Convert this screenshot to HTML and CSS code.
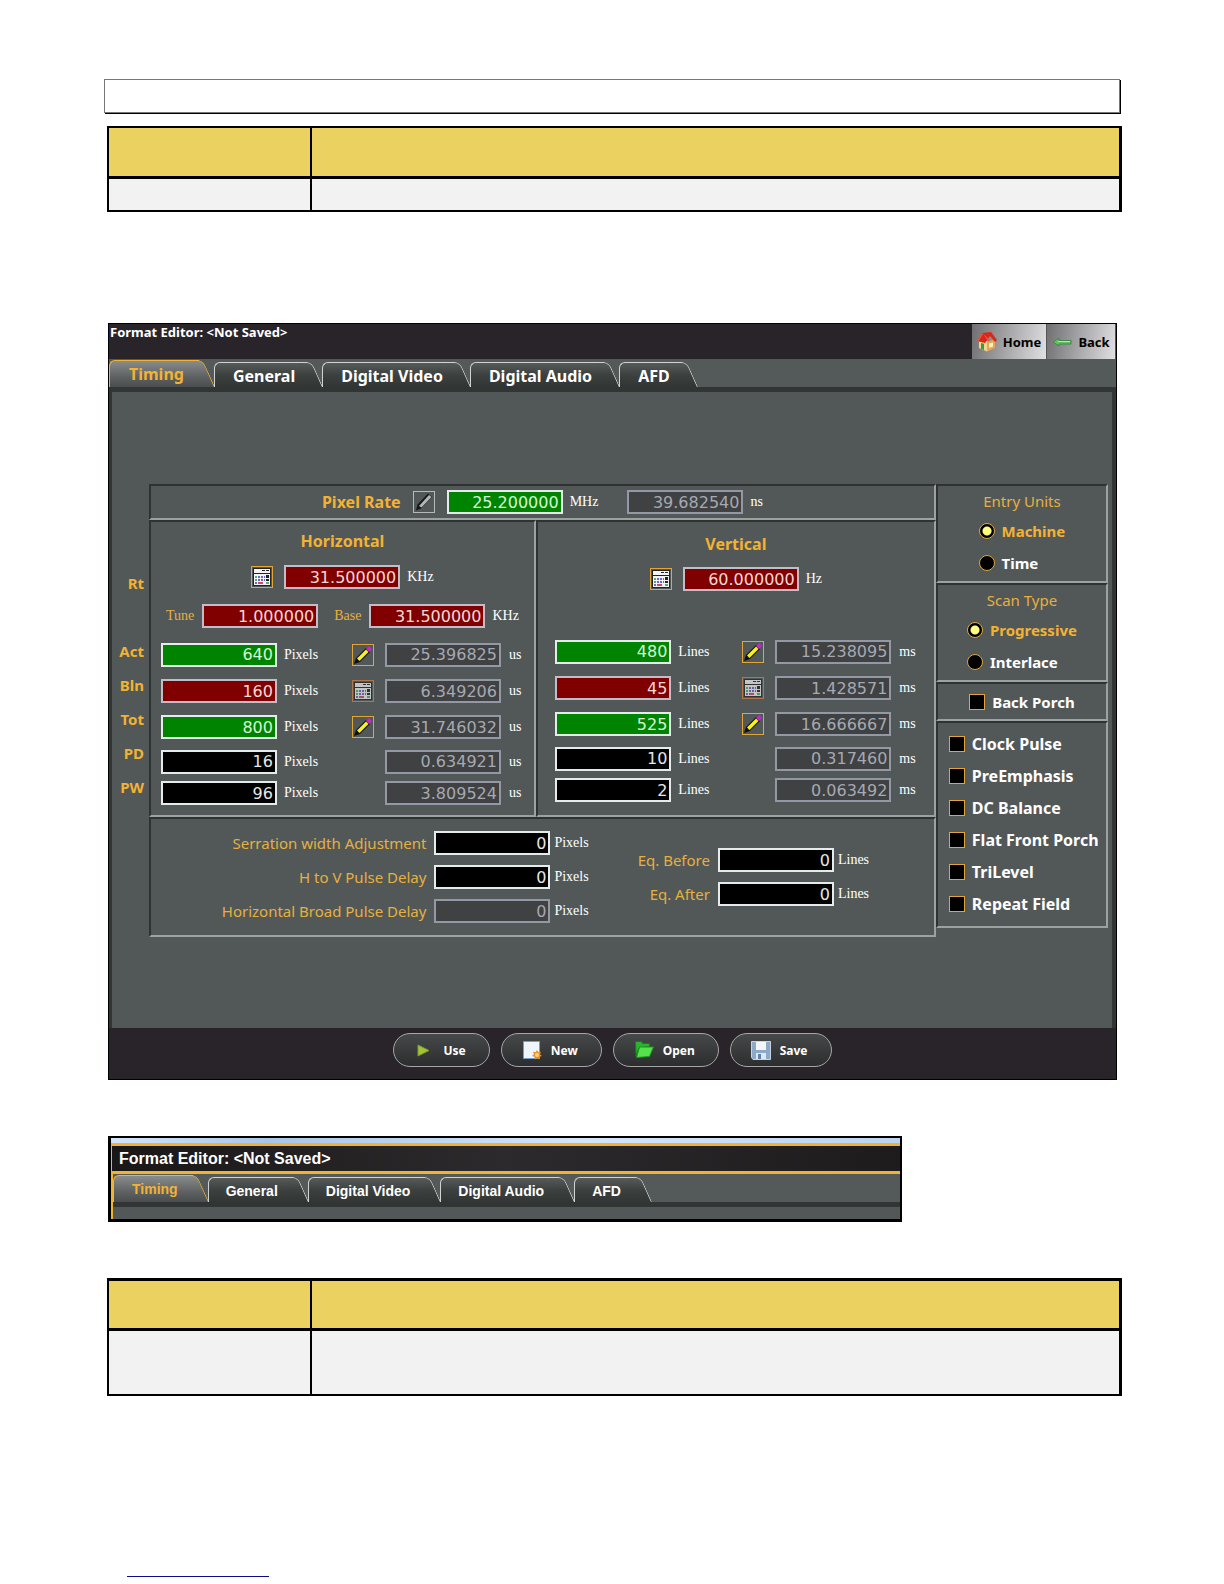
FILE: index.html
```html
<!DOCTYPE html>
<html lang="en">
<head>
<meta charset="utf-8">
<meta name="viewport" content="width=device-width, initial-scale=1">
<title>Format Editor</title>
<link rel="stylesheet" href="styles.css">
</head>
<body>
<svg class="defs" aria-hidden="true">
  <symbol id="pencil" viewBox="0 0 20 20">
    <path d="M1 19l2-6L13 3l4 4L7 17z" fill="#111"/>
    <path d="M4 13.500L13 4.500l2.500 2.500L6.500 16z" fill="#f8f21c"/>
    <path d="M13 4l3-3 3 3-3 3z" fill="#c227c9"/>
  </symbol>
  <symbol id="pencil-plain" viewBox="0 0 20 20">
    <path d="M2 18.500l1.500-6L14 1.500l4 3.500L7 16.500z" fill="#161819"/>
    <path d="M5 14L15 3l2.500 2L7.500 15.500z" fill="#b2b6b7"/>
  </symbol>
  <symbol id="calc" viewBox="0 0 20 20">
    <path d="M1 1h18v18H1z" fill="#222"/>
    <path d="M2 2h16v4H2zM2 7h16v11H2z" fill="#f4f4f4"/>
    <path d="M10 3h3v1h-3zM14 3h3v1h-3z" fill="#222"/>
    <path d="M3 9h2v2H3zM3 12h2v2H3z" fill="#58a878"/>
    <path d="M6 9h2v2H6zM9 9h2v2H9zM12 9h1v2h-1zM6 12h2v2H6zM9 12h2v2H9zM12 12h1v2h-1zM3 15h2v2H3z" fill="#6f65c4"/>
    <path d="M6 15h5v2H6z" fill="#d24a60"/>
    <path d="M14 8h3v3h-3zM14 12h3v2h-3z" fill="#222"/>
    <path d="M14 15h3v2h-3z" fill="#58a878"/>
  </symbol>
</svg>

<main class="page">
  <div class="header-box"></div>

  <table class="sheet">
    <thead><tr><th class="sheet-name"></th><th></th></tr></thead>
    <tbody><tr><td></td><td></td></tr></tbody>
  </table>

  <section class="editor">
    <header class="titlebar">
      <h1 class="title">Format Editor: &lt;Not Saved&gt;</h1>
      <button class="nav" type="button">
        <svg class="nav-icon" viewBox="0 0 20 20" aria-hidden="true">
          <path d="M2 9v7l8 3.500V9z" fill="#f3d68f"/><path d="M10 19.500l8-3.500V8l-8 1z" fill="#e2a85a"/>
          <path d="M0 9l5-8 9-1 6 8-2 2-5-6-5 7z" fill="#d9281b"/><path d="M5 1L0 9l1 1 5-8 6 8 1-2z" fill="#f15a3a"/>
          <path d="M4 11l3 .8V18l-3-1.200z" fill="#3e9b35"/><path d="M12 11.500l4-1v4l-4 1.200z" fill="#fff3bd"/>
        </svg>Home</button>
      <button class="nav" type="button">
        <svg class="nav-icon" viewBox="0 0 20 20" aria-hidden="true">
          <path d="M1 10l6-4v2.500h12v3.500H7V14z" fill="#69bd69" stroke="#3d8a45"/><path d="M6 9.500h12" stroke="#b4e6ad"/>
        </svg>Back</button>
    </header>

    <nav class="tabs">
      <button class="tab active" type="button">Timing</button>
      <button class="tab" type="button">General</button>
      <button class="tab" type="button">Digital Video</button>
      <button class="tab" type="button">Digital Audio</button>
      <button class="tab" type="button">AFD</button>
    </nav>

    <div class="content">
      <div class="row-names">
        <span class="rate">Rt</span><span>Act</span><span>Bln</span><span>Tot</span><span>PD</span><span>PW</span>
      </div>

      <div class="timing">
        <div class="panel pixel-rate">
          <label class="heading" for="pixel-rate">Pixel Rate</label>
          <button class="icon plain" type="button" aria-label="Edit pixel rate"><svg><use href="#pencil-plain"/></svg></button>
          <input class="field green" id="pixel-rate" value="25.200000"><span class="unit">MHz</span>
          <input class="field gray period" value="39.682540" aria-label="Pixel period" readonly><span class="unit">ns</span>
        </div>

        <div class="panel axis">
          <h2 class="heading">Horizontal</h2>
          <div class="line">
            <button class="icon" type="button" aria-label="Calculate horizontal rate"><svg><use href="#calc"/></svg></button>
            <input class="field red" value="31.500000" aria-label="Horizontal rate"><span class="unit">KHz</span>
          </div>
          <div class="line tune">
            <label class="small" for="tune">Tune</label><input class="field red" id="tune" value="1.000000">
            <label class="small base" for="base">Base</label><input class="field red" id="base" value="31.500000"><span class="unit">KHz</span>
          </div>
          <div class="values">
            <input class="field green" value="640" aria-label="Active pixels"><span>Pixels</span>
            <button class="icon" type="button" aria-label="Edit active"><svg><use href="#pencil"/></svg></button>
            <input class="field gray" value="25.396825" aria-label="Active time" readonly><span>us</span>

            <input class="field red" value="160" aria-label="Blanking pixels"><span>Pixels</span>
            <button class="icon dim" type="button" aria-label="Calculate blanking"><svg><use href="#calc"/></svg></button>
            <input class="field gray" value="6.349206" aria-label="Blanking time" readonly><span>us</span>

            <input class="field green" value="800" aria-label="Total pixels"><span>Pixels</span>
            <button class="icon" type="button" aria-label="Edit total"><svg><use href="#pencil"/></svg></button>
            <input class="field gray" value="31.746032" aria-label="Total time" readonly><span>us</span>

            <input class="field" value="16" aria-label="Pulse delay pixels"><span>Pixels</span><i></i>
            <input class="field gray" value="0.634921" aria-label="Pulse delay time" readonly><span>us</span>

            <input class="field" value="96" aria-label="Pulse width pixels"><span>Pixels</span><i></i>
            <input class="field gray" value="3.809524" aria-label="Pulse width time" readonly><span>us</span>
          </div>
        </div>

        <div class="panel axis vertical">
          <h2 class="heading">Vertical</h2>
          <div class="line">
            <button class="icon" type="button" aria-label="Calculate vertical rate"><svg><use href="#calc"/></svg></button>
            <input class="field red" value="60.000000" aria-label="Vertical rate"><span class="unit">Hz</span>
          </div>
          <div class="values">
            <input class="field green" value="480" aria-label="Active lines"><span>Lines</span>
            <button class="icon" type="button" aria-label="Edit active"><svg><use href="#pencil"/></svg></button>
            <input class="field gray" value="15.238095" aria-label="Active time" readonly><span>ms</span>

            <input class="field red" value="45" aria-label="Blanking lines"><span>Lines</span>
            <button class="icon dim" type="button" aria-label="Calculate blanking"><svg><use href="#calc"/></svg></button>
            <input class="field gray" value="1.428571" aria-label="Blanking time" readonly><span>ms</span>

            <input class="field green" value="525" aria-label="Total lines"><span>Lines</span>
            <button class="icon" type="button" aria-label="Edit total"><svg><use href="#pencil"/></svg></button>
            <input class="field gray" value="16.666667" aria-label="Total time" readonly><span>ms</span>

            <input class="field" value="10" aria-label="Pulse delay lines"><span>Lines</span><i></i>
            <input class="field gray" value="0.317460" aria-label="Pulse delay time" readonly><span>ms</span>

            <input class="field" value="2" aria-label="Pulse width lines"><span>Lines</span><i></i>
            <input class="field gray" value="0.063492" aria-label="Pulse width time" readonly><span>ms</span>
          </div>
        </div>

        <div class="panel adjust">
          <div class="adjust-group">
            <label for="serration">Serration width Adjustment</label><input class="field" id="serration" value="0"><span>Pixels</span>
            <label for="hv-delay">H to V Pulse Delay</label><input class="field" id="hv-delay" value="0"><span>Pixels</span>
            <label for="broad-delay">Horizontal Broad Pulse Delay</label><input class="field gray" id="broad-delay" value="0" readonly><span>Pixels</span>
          </div>
          <div class="adjust-group">
            <label for="eq-before">Eq. Before</label><input class="field" id="eq-before" value="0"><span>Lines</span>
            <label for="eq-after">Eq. After</label><input class="field" id="eq-after" value="0"><span>Lines</span>
          </div>
        </div>
      </div>

      <aside class="options">
        <fieldset class="panel choice">
          <div class="choice-title">Entry Units</div>
          <div class="choice-list">
            <label><input type="radio" name="units" checked><span>Machine</span></label>
            <label><input type="radio" name="units"><span>Time</span></label>
          </div>
        </fieldset>
        <fieldset class="panel choice">
          <div class="choice-title">Scan Type</div>
          <div class="choice-list">
            <label><input type="radio" name="scan" checked><span>Progressive</span></label>
            <label><input type="radio" name="scan"><span>Interlace</span></label>
          </div>
        </fieldset>
        <div class="panel checks porch">
          <label><input type="checkbox"><span>Back Porch</span></label>
        </div>
        <div class="panel checks flags">
          <label><input type="checkbox"><span>Clock Pulse</span></label>
          <label><input type="checkbox"><span>PreEmphasis</span></label>
          <label><input type="checkbox"><span>DC Balance</span></label>
          <label><input type="checkbox"><span>Flat Front Porch</span></label>
          <label><input type="checkbox"><span>TriLevel</span></label>
          <label><input type="checkbox"><span>Repeat Field</span></label>
        </div>
      </aside>
    </div>

    <footer class="actions">
      <button class="action" type="button">
        <svg viewBox="0 0 20 20" aria-hidden="true"><path d="M4 5l11 5.500L4 16z" fill="#a3c339" stroke="#7f9a28"/></svg>Use</button>
      <button class="action" type="button">
        <svg viewBox="0 0 20 20" aria-hidden="true">
          <path d="M1.500 1.500h16v17h-16z" fill="#eef5fd" stroke="#6f9fd0"/>
          <path d="M15 10l1.300 2.200 2.700-.4-1 2.400 2 1.800-2.500.8-.3 2.700-2.200-1.300-2.200 1.300-.3-2.700-2.500-.8 2-1.800-1-2.400 2.700.4z" fill="#ef8d22"/>
          <circle cx="15" cy="15" r="2" fill="#ffd57c"/>
        </svg>New</button>
      <button class="action" type="button">
        <svg viewBox="0 0 20 20" aria-hidden="true">
          <path d="M1.500 1.500h6l1 2h7v3L5 8 2 16z" fill="#29b52c" stroke="#147c1b"/>
          <path d="M5.500 7h14l-4 9.500-13 1z" fill="#55e04c" stroke="#1c9422"/>
        </svg>Open</button>
      <button class="action" type="button">
        <svg viewBox="0 0 20 20" aria-hidden="true">
          <path d="M.5 1.500h19v18H2l-1.500-2z" fill="#8ea8c8" stroke="#c5d4e6"/>
          <path d="M5 2h10v8H5z" fill="#f3f5f7"/><path d="M5 13h10v6H5z" fill="#dce9f5"/><path d="M7 14h3v5H7z" fill="#5f81aa"/>
        </svg>Save</button>
    </footer>
  </section>

  <section class="snippet">
    <div class="sky"></div>
    <h2 class="snippet-title">Format Editor: &lt;Not Saved&gt;</h2>
    <div class="snippet-body">
      <nav class="tabs compact">
        <button class="tab active" type="button">Timing</button>
        <button class="tab" type="button">General</button>
        <button class="tab" type="button">Digital Video</button>
        <button class="tab" type="button">Digital Audio</button>
        <button class="tab" type="button">AFD</button>
      </nav>
    </div>
  </section>

  <table class="sheet tall">
    <thead><tr><th class="sheet-name"></th><th></th></tr></thead>
    <tbody><tr><td></td><td></td></tr></tbody>
  </table>

  <a class="foot-link" href="#" aria-label="Website"></a>
</main>
</body>
</html>
```
FILE: styles.css
```css
* { box-sizing: border-box; }

body {
  margin: 0;
  background: #fff;
  font-family: "Noto Sans", "Open Sans", sans-serif;
}

button, input { font-family: inherit; }
button { cursor: pointer; }
.defs { display: none; }

.page {
  display: flex;
  flex-direction: column;
  padding: 79px 102px 8px 104px;
}

.header-box {
  height: 34px;
  margin-right: 2px;
  border: 1px solid #777;
  box-shadow: 1px 1px 0 #000;
}

/* Ruled tables */
.sheet {
  margin: 13px 0 0 3px;
  table-layout: fixed;
  border-collapse: collapse;
  border: 2px solid #000;
  border-right-width: 3px;
}
.sheet-name { width: 20%; }
.sheet th, .sheet td { padding: 0; border: 2px solid #000; }
.sheet th:last-child, .sheet td:last-child { border-right-width: 3px; }
.sheet th { height: 50px; background: #ebd160; border-bottom-width: 3px; }
.sheet td { height: 34px; background: #f2f2f2; }
.sheet.tall { margin-top: 56px; border-top-width: 3px; }
.sheet.tall td { height: 65px; }

/* Editor window */
.editor {
  margin: 111px 5px 0 4px;
  border: 1px solid #000;
  background: #525857;
}

.titlebar { display: flex; height: 35px; background: #29242a; }
.title {
  flex: 1;
  margin: 0;
  padding-left: 1px;
  font-size: 13px;
  line-height: 16px;
  color: #fff;
}
.nav {
  display: flex;
  align-items: center;
  justify-content: center;
  gap: 6px;
  width: 75px;
  padding: 0;
  border: 0;
  border-right: 1px solid #555;
  background: linear-gradient(100deg, #6f6f72, #a9a9ac 50%, #e0e0e2);
  font-size: 13px;
  font-weight: 700;
  color: #000;
}
.nav + .nav { width: 69px; }
.nav-icon { width: 20px; height: 20px; }

.tabs {
  display: flex;
  align-items: flex-end;
  height: 33px;
  padding-top: 1px;
  border-bottom: 5px solid #313534;
  background: #545a59;
}
.tab {
  position: relative;
  isolation: isolate;
  height: 25px;
  margin-right: -1px;
  padding: 3px 28px 0 19px;
  border: 0;
  background: none;
  font-size: 16px;
  font-weight: 700;
  line-height: 22px;
  color: #fff;
}
.tab::before, .tab::after {
  content: "";
  position: absolute;
  z-index: -1;
  top: 0;
  bottom: 0;
  border: 0 solid #d0d3d2;
  border-top-width: 1px;
  background: linear-gradient(#565b5a, #3c403f 50%, #313534);
}
.tab::before { left: 0; right: 16px; border-left-width: 1px; border-top-left-radius: 6px; }
.tab::after {
  right: 0;
  width: 16px;
  border-right-width: 1px;
  border-top-right-radius: 6px;
  transform: skewX(24deg);
  transform-origin: bottom right;
}
.tab.active { height: 27px; padding: 1px 31px 0 20px; color: #f2b233; }
.tab.active::before, .tab.active::after {
  border-color: #f2b233;
  background: linear-gradient(#8a8c8c, #5f6262 60%, #4a4d4d);
}

.content {
  display: flex;
  align-items: flex-start;
  padding: 92px 4px 91px 0;
  border: 0 solid #313534;
  border-width: 0 4px 0 3px;
}
.row-names {
  display: flex;
  flex-direction: column;
  width: 37px;
  padding: 82px 5px 0 0;
  font-size: 15px;
  font-weight: 700;
  line-height: 34px;
  text-align: right;
  color: #f2b233;
}
.rate { margin-bottom: 34px; }

.timing { flex: 786; display: grid; grid-template-columns: 386fr 399fr; }
.options { flex: 172; }

.panel {
  min-width: 0;
  margin: 0;
  border: 2px solid;
  border-color: #2e3332 #9ca2a1 #9ca2a1 #2e3332;
}
.heading {
  margin: 0;
  font-size: 16px;
  font-weight: 700;
  line-height: 20px;
  text-align: center;
  color: #f2b233;
}

.field {
  width: 116px;
  height: 24px;
  padding: 0 2px;
  border: 2px solid #e4ebeb;
  border-radius: 0;
  background: #000;
  font-family: "DejaVu Sans", sans-serif;
  font-size: 16px;
  text-align: right;
  color: #e6e6e6;
}
.green { background: #008400; color: #d5f5d5; }
.red { border-color: #c3bcc9; background: #800000; color: #f6d8d8; }
.gray { border-color: #9498a5; background: #3f4143; color: #a6a9b0; }

.unit, .values, .adjust-group span, .small {
  font-family: "Liberation Serif", serif;
  font-size: 14px;
  color: #fff;
}
.unit { margin-left: 7px; }

.icon {
  width: 22px;
  height: 22px;
  padding: 0;
  border: 1px solid #e0a63a;
  background: none;
}
.icon svg { display: block; width: 20px; height: 20px; }
.icon.plain { border-color: #b5b9b9; }
.icon.dim { opacity: 0.7; border-color: #d8854d; }

.pixel-rate {
  grid-column: span 2;
  display: flex;
  align-items: center;
  justify-content: center;
  padding: 4px 0;
}
.pixel-rate .icon { margin: 0 12px; }
.period { margin-left: 29px; }

.axis { padding: 9px 0 7px; }
.line {
  display: flex;
  align-items: center;
  justify-content: center;
  height: 24px;
  margin-top: 14px;
}
.line .icon { margin-right: 11px; }
.tune { margin-top: 15px; }
.small { margin-right: 8px; color: #e6b040; }
.base { margin-left: 16px; }

.values {
  display: grid;
  grid-template-columns: 116px 61px 22px 116px 20px;
  grid-template-rows: 37px 36px 36px 33px 30px;
  column-gap: 7px;
  align-items: center;
  justify-content: center;
  margin-top: 8px;
}
.values .gray { margin-left: 4px; }
.values span:nth-of-type(even) { margin-left: 5px; }
.vertical { padding-top: 12px; }
.vertical .line { margin-top: 13px; }
.vertical .values {
  grid-template-columns: 116px 57px 22px 116px 22px;
  margin-top: 42px;
}

.adjust {
  grid-column: span 2;
  display: flex;
  align-items: center;
  justify-content: center;
  gap: 49px;
  padding: 12px 0 12px 6px;
}
.adjust-group {
  display: grid;
  grid-template-columns: auto 116px auto;
  align-items: center;
  gap: 10px 4px;
}
.adjust-group label {
  margin-right: 4px;
  font-size: 15px;
  line-height: 20px;
  text-align: right;
  color: #e6b040;
}

.choice {
  display: flex;
  flex-direction: column;
  align-items: center;
  padding: 4px 0 2px;
}
.choice-title {
  margin-bottom: 3px;
  font-size: 15px;
  line-height: 22px;
  color: #e6b040;
}
.options label {
  display: flex;
  align-items: center;
  gap: 7px;
  height: 32px;
  font-size: 15px;
  font-weight: 700;
  line-height: 20px;
  color: #fff;
}
.options input {
  appearance: none;
  width: 16px;
  height: 16px;
  margin: 0;
  border: 1px solid #e0a63a;
  background: #000;
}
.options input[type="radio"] { border-radius: 50%; }
.options input[type="radio"]:checked { background: radial-gradient(circle, #ffff80 4px, #000 5px); }
.options input:checked + span { color: #f2b233; }
.checks { display: flex; flex-direction: column; align-items: center; }
.porch { padding: 2px 0 1px; }
.flags { padding: 5px 0 6px 11px; align-items: flex-start; }
.flags label { font-size: 16px; }

.actions {
  display: flex;
  justify-content: center;
  gap: 11px;
  padding: 5px 0 12px;
  background: #29242a;
}
.action {
  display: flex;
  align-items: center;
  gap: 9px;
  height: 34px;
  padding: 0 23px 0 20px;
  border: 1px solid #a6a6a6;
  border-radius: 17px;
  background: linear-gradient(#464949, #2c2d2e);
  font-size: 12px;
  font-weight: 700;
  color: #fff;
}
.action svg { width: 20px; height: 20px; }

/* Cropped view of the tab bar */
.snippet {
  width: 78%;
  margin: 56px 0 0 4px;
  border: 2px solid #000;
  border-width: 2px 2px 3px 3px;
  font-family: "Liberation Sans", sans-serif;
}
.sky { height: 5px; background: linear-gradient(90deg, #d5e5f8, #a9c6e8 20%, #d5e5f8 60%, #bcd4ef); }
.snippet-title {
  margin: 0;
  padding-left: 7px;
  border: 3px solid #f2b233;
  border-width: 3px 0 3px 1px;
  background: linear-gradient(90deg, #1a1718, #2c2a2c 50%, #1e1b1d);
  font-size: 16px;
  line-height: 25px;
  color: #fff;
}
.snippet-body {
  height: 45px;
  border-left: 2px solid #f2b233;
  background: #525857;
}
.compact .tab { padding: 3px 31px 0 18px; font-size: 14px; }
.compact .tab.active { padding: 1px 31px 0 19px; }

.foot-link {
  width: 142px;
  height: 20px;
  margin: 161px 0 0 23px;
  border-bottom: 1px solid #0b0b8c;
}
```
